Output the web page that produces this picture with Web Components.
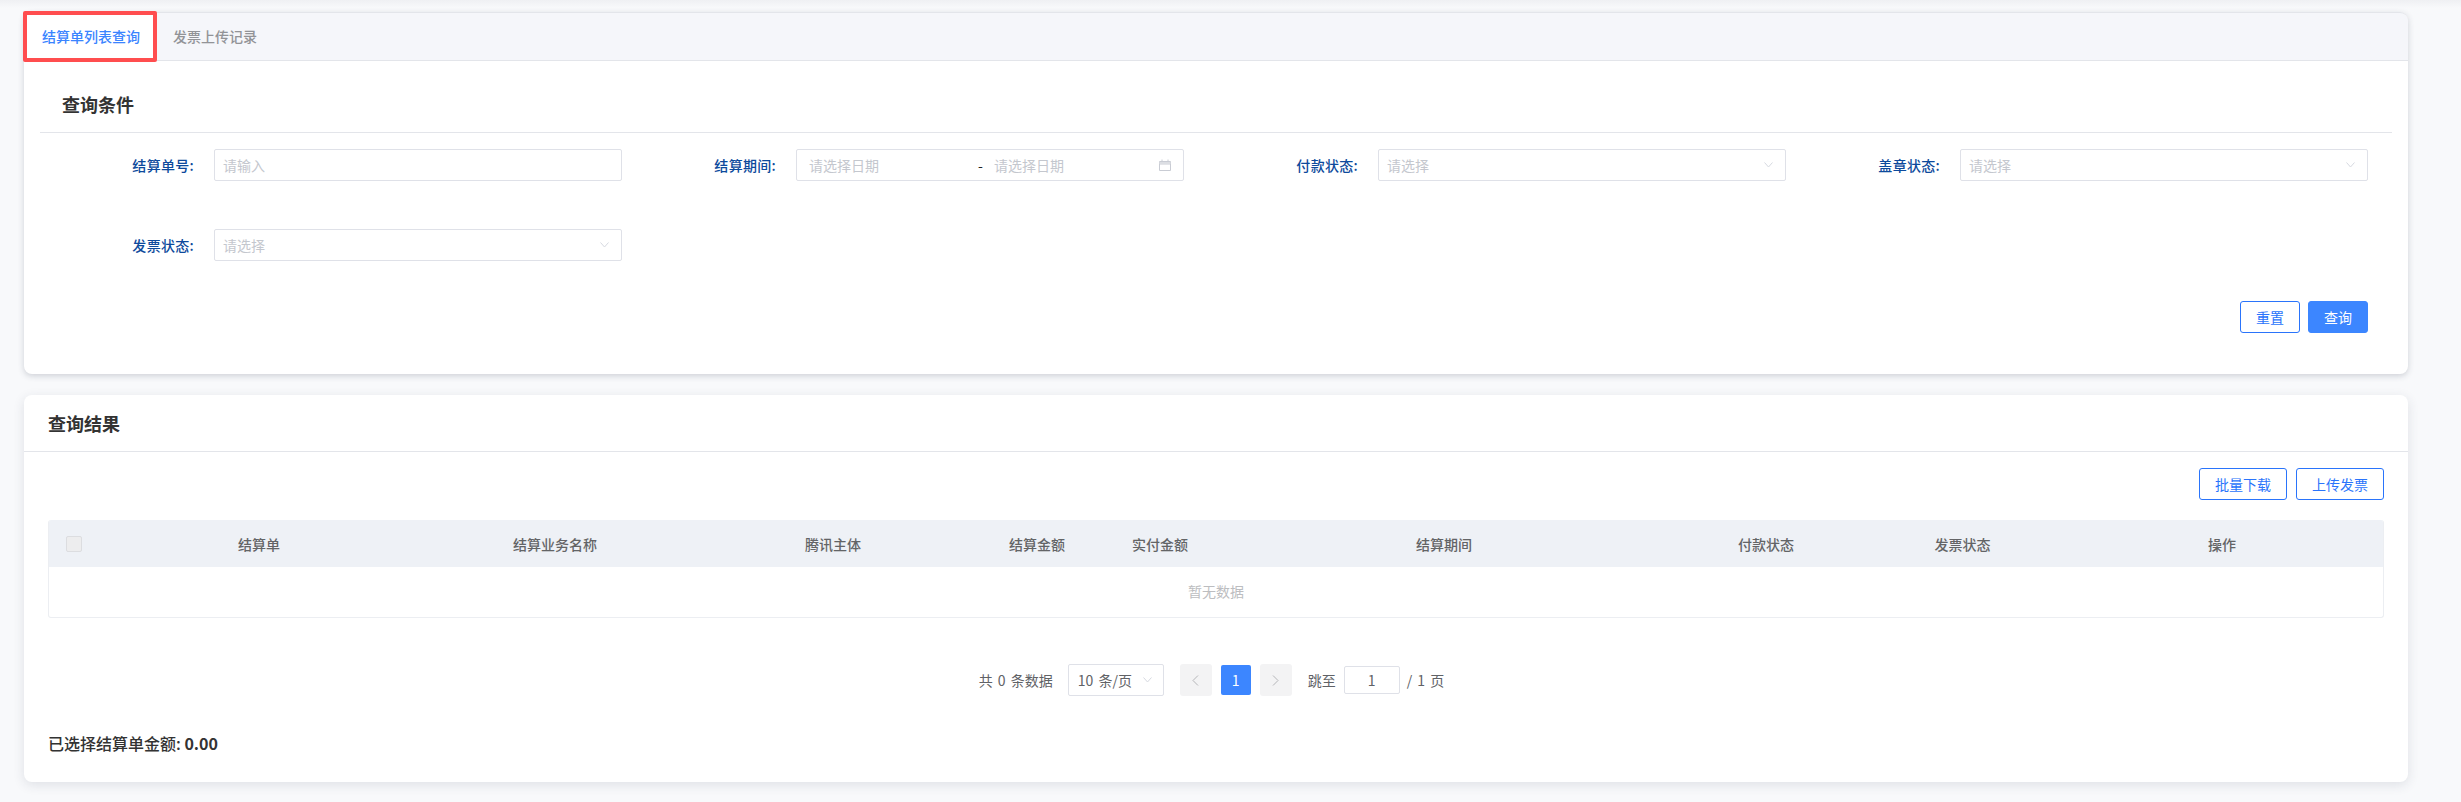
<!DOCTYPE html>
<html lang="zh-CN">
<head>
<meta charset="utf-8">
<title>结算单列表查询</title>
<style>
    html, body { margin: 0; height: 100%; }
    body {
        background: #f8f9fb;
        font-family: "Noto Sans CJK SC", "Noto Sans", sans-serif;
        font-size: 14px;
        color: #333;
        overflow: hidden;
    }
</style>
</head>
<body>
<settle-page>
    <page-card>
        <tab-bar active="结算单列表查询" other="发票上传记录"></tab-bar>
        <search-form></search-form>
    </page-card>
    <page-card class="second">
        <result-panel></result-panel>
    </page-card>
</settle-page>

<script>
// small shared icons
const CHEVRON = `<svg width="9" height="6" viewBox="0 0 9 6" fill="none"><path d="M.5.5l4 4.5 4-4.5" stroke="#d6d9e0" stroke-width="1"/></svg>`;
const CALENDAR = `<svg width="12" height="12" viewBox="0 0 12 12" fill="none"><path d="M.5 2.5h11v9H.5zM.5 5h11" stroke="#c9ccd4" stroke-width="1"/><path d="M.5 3h11v2H.5z" fill="#dcdee3"/><path d="M3 .5v2M9 .5v2" stroke="#c9ccd4" stroke-width="1"/></svg>`;

// page frame
class SettlePage extends HTMLElement {
    constructor() {
        super();
        this.attachShadow({mode: "open"});
        this.shadowRoot.innerHTML = `
            <style>
                :host {
                    display: flex;
                    flex-direction: column;
                    gap: 21px;
                    padding: 12px 53px 0 24px;
                    /* faint shadow from the top bar that is out of frame */
                    background: linear-gradient(#eff0f3, #f8f9fb 8px) no-repeat top / 100% 8px;
                }
            </style>
            <slot></slot>
        `;
    }
}
customElements.define('settle-page', SettlePage);

class PageCard extends HTMLElement {
    constructor() {
        super();
        this.attachShadow({mode: "open"});
        this.shadowRoot.innerHTML = `
            <style>
                :host {
                    display: block;
                    position: relative;
                    background: #fff;
                    border-radius: 8px;
                    box-shadow: 0 2px 6px rgba(40, 50, 70, .2);
                }
                :host(.second) {
                    box-shadow: 0 3px 12px rgba(40, 50, 70, .12);
                }
            </style>
            <slot></slot>
        `;
    }
}
customElements.define('page-card', PageCard);

// tabs, with the red annotation box on top of the active one
class TabBar extends HTMLElement {
    constructor() {
        super();
        this.attachShadow({mode: "open"});
    }
    connectedCallback() {
        this.shadowRoot.innerHTML = `
            <style>
                :host {
                    display: flex;
                    position: relative;
                    height: 47px;
                    background: #f5f6fa;
                    border: 1px solid #e3e5ea;
                    border-width: 1px 0 1px 0;
                    border-radius: 8px 8px 0 0;
                    line-height: 47px;
                    font-weight: 500;
                }
                span { padding: 0 16px 0 18px; color: #929397; white-space: nowrap; }
                .on { background: #fff; color: #3a84ff; width: 98px; }
                .on + span { padding-left: 17px; }
                .mark {
                    position: absolute;
                    left: -1px;
                    top: -2px;
                    width: 126px;
                    height: 43px;
                    border: 4px solid #ff4d4f;
                    border-radius: 2px;
                }
            </style>
            <span class="on">${this.getAttribute('active')}</span>
            <span>${this.getAttribute('other')}</span>
            <div class="mark"></div>
        `;
    }
}
customElements.define('tab-bar', TabBar);

// one label + control cell in the query grid
class FormField extends HTMLElement {
    constructor() {
        super();
        this.attachShadow({mode: "open"});
    }
    connectedCallback() {
        this.shadowRoot.innerHTML = `
            <style>
                :host { display: flex; align-items: center; height: 32px; }
                label {
                    box-sizing: border-box;
                    flex: none;
                    width: 174px;
                    padding-right: 20px;
                    text-align: right;
                    color: #0d4a9c;
                    font-weight: 500;
                    letter-spacing: .3px;
                    white-space: nowrap;
                }
            </style>
            <label>${this.getAttribute('label')}:</label>
            <slot></slot>
        `;
    }
}
customElements.define('form-field', FormField);

// fake input box; kind = text | select | date
class FieldBox extends HTMLElement {
    constructor() {
        super();
        this.attachShadow({mode: "open"});
    }
    connectedCallback() {
        const kind = this.getAttribute('kind') || 'text';
        const holder = this.getAttribute('holder') || '请选择';
        let inner = `<span class="ph">${holder}</span>`;
        if (kind === 'select') {
            inner += `<span class="end">${CHEVRON}</span>`;
        }
        if (kind === 'date') {
            inner = `<span class="ph d1">请选择日期</span><span class="dash">-</span>
                     <span class="ph d2">请选择日期</span><span class="end cal">${CALENDAR}</span>`;
        }
        this.shadowRoot.innerHTML = `
            <style>
                :host {
                    box-sizing: border-box;
                    display: flex;
                    align-items: center;
                    width: 408px;
                    height: 32px;
                    padding: 0 12px 0 8px;
                    background: #fff;
                    border: 1px solid #dfe1e8;
                    border-radius: 2px;
                }
                :host([kind="date"]) { width: 388px; padding-left: 12px; }
                .ph { color: #c4c7ce; white-space: nowrap; }
                .end { margin-left: auto; display: flex; }
                .d1 { width: 169px; }
                .dash { color: #222; width: 16px; }
            </style>
            ${inner}
        `;
    }
}
customElements.define('field-box', FieldBox);

class PlainBtn extends HTMLElement {
    constructor() {
        super();
        this.attachShadow({mode: "open"});
        this.shadowRoot.innerHTML = `
            <style>
                :host {
                    box-sizing: border-box;
                    display: inline-flex;
                    align-items: center;
                    justify-content: center;
                    width: 60px;
                    height: 32px;
                    background: #fff;
                    border: 1px solid #2a74fb;
                    border-radius: 3px;
                    color: #2a74fb;
                    font-size: 14px;
                    white-space: nowrap;
                }
                :host(.primary) { background: #3c86ff; border-color: #3c86ff; color: #fff; }
                :host(.wide) { width: 88px; }
            </style>
            <slot></slot>
        `;
    }
}
customElements.define('plain-btn', PlainBtn);

class SearchForm extends HTMLElement {
    constructor() {
        super();
        this.attachShadow({mode: "open"});
        this.shadowRoot.innerHTML = `
            <style>
                :host { display: block; padding: 0 16px 41px; }
                h3 {
                    margin: 0;
                    padding: 29px 0 14px 22px;
                    font-size: 18px;
                    line-height: 28px;
                    font-weight: 700;
                    color: #333;
                    border-bottom: 1px solid #e3e5ea;
                }
                .grid {
                    display: grid;
                    grid-template-columns: repeat(4, 582px);
                    row-gap: 48px;
                    margin-top: 16px;
                }
                .btns {
                    display: flex;
                    justify-content: flex-end;
                    gap: 8px;
                    margin: 40px 24px 0 0;
                }
            </style>
            <h3>查询条件</h3>
            <div class="grid">
                <form-field label="结算单号"><field-box holder="请输入"></field-box></form-field>
                <form-field label="结算期间"><field-box kind="date"></field-box></form-field>
                <form-field label="付款状态"><field-box kind="select"></field-box></form-field>
                <form-field label="盖章状态"><field-box kind="select"></field-box></form-field>
                <form-field label="发票状态"><field-box kind="select"></field-box></form-field>
            </div>
            <div class="btns">
                <plain-btn>重置</plain-btn>
                <plain-btn class="primary">查询</plain-btn>
            </div>
        `;
    }
}
customElements.define('search-form', SearchForm);

class ResultTable extends HTMLElement {
    constructor() {
        super();
        this.attachShadow({mode: "open"});
        const cols = ['结算单', '结算业务名称', '腾讯主体', '结算金额', '实付金额', '结算期间', '付款状态', '发票状态', '操作'];
        this.shadowRoot.innerHTML = `
            <style>
                :host {
                    display: block;
                    border: 1px solid #eceef2;
                    border-top: 0;
                    border-radius: 3px;
                    overflow: hidden;
                }
                .head {
                    display: grid;
                    grid-template-columns: 51px 318px 274px 282px 126px 120px 448px 196px 197px 1fr;
                    align-items: center;
                    height: 47px;
                    background: #eef1f6;
                    color: #636466;
                    font-weight: 500;
                    text-align: center;
                }
                .box {
                    box-sizing: border-box;
                    width: 16px;
                    height: 16px;
                    margin-left: 17px;
                    background: #ededee;
                    border: 1px solid #dcdde0;
                    border-radius: 2px;
                }
                .empty {
                    height: 50px;
                    line-height: 49px;
                    text-align: center;
                    color: #bcbdc0;
                }
            </style>
            <div class="head">
                <div class="box"></div>
                ${cols.map(c => `<div>${c}</div>`).join('')}
            </div>
            <div class="empty">暂无数据</div>
        `;
    }
}
customElements.define('result-table', ResultTable);

class PagerBar extends HTMLElement {
    constructor() {
        super();
        this.attachShadow({mode: "open"});
        this.shadowRoot.innerHTML = `
            <style>
                :host {
                    display: flex;
                    align-items: center;
                    justify-content: center;
                    height: 32px;
                    padding-right: 9px;
                    color: #606266;
                    white-space: nowrap;
                    word-spacing: 2px;
                }
                .size {
                    box-sizing: border-box;
                    display: flex;
                    align-items: center;
                    justify-content: space-between;
                    width: 96px;
                    height: 32px;
                    margin: 0 16px 0 15px;
                    padding: 0 11px 0 9px;
                    border: 1px solid #dfe1e8;
                    border-radius: 2px;
                }
                .arrow {
                    display: flex;
                    align-items: center;
                    justify-content: center;
                    width: 32px;
                    height: 32px;
                    background: #f3f3f4;
                    border-radius: 3px;
                }
                .cur {
                    width: 30px;
                    height: 30px;
                    line-height: 30px;
                    margin: 0 9px;
                    text-align: center;
                    background: #3c86ff;
                    color: #fff;
                    border-radius: 2px;
                }
                .jump {
                    box-sizing: border-box;
                    width: 56px;
                    height: 28px;
                    line-height: 26px;
                    margin: 0 7px 0 8px;
                    text-align: center;
                    border: 1px solid #dfe1e8;
                    border-radius: 2px;
                }
                .goto { margin-left: 16px; }
            </style>
            <span>共 0 条数据</span>
            <div class="size"><span>10 条/页</span>${CHEVRON}</div>
            <div class="arrow"><svg width="7" height="11" viewBox="0 0 7 11" fill="none"><path d="M6 .5l-5 5 5 5" stroke="#b4b5b8"/></svg></div>
            <div class="cur">1</div>
            <div class="arrow"><svg width="7" height="11" viewBox="0 0 7 11" fill="none"><path d="M1 .5l5 5-5 5" stroke="#b4b5b8"/></svg></div>
            <span class="goto">跳至</span>
            <div class="jump">1</div>
            <span>/ 1 页</span>
        `;
    }
}
customElements.define('pager-bar', PagerBar);

class ResultPanel extends HTMLElement {
    constructor() {
        super();
        this.attachShadow({mode: "open"});
        this.shadowRoot.innerHTML = `
            <style>
                :host { display: block; padding-bottom: 27px; }
                h3 {
                    margin: 0;
                    padding: 14px 24px;
                    font-size: 18px;
                    line-height: 28px;
                    font-weight: 700;
                    color: #333;
                    border-bottom: 1px solid #e3e5ea;
                }
                .tools {
                    display: flex;
                    justify-content: flex-end;
                    gap: 9px;
                    margin: 16px 24px 20px;
                }
                result-table { margin: 0 24px; }
                pager-bar { margin-top: 46px; }
                .sum {
                    margin: 35px 24px 0;
                    font-size: 16px;
                    line-height: 24px;
                    font-weight: 500;
                    color: #333;
                }
                .sum b { font-weight: 700; }
            </style>
            <h3>查询结果</h3>
            <div class="tools">
                <plain-btn class="wide">批量下载</plain-btn>
                <plain-btn class="wide">上传发票</plain-btn>
            </div>
            <result-table></result-table>
            <pager-bar></pager-bar>
            <div class="sum">已选择结算单金额: <b>0.00</b></div>
        `;
    }
}
customElements.define('result-panel', ResultPanel);
</script>
</body>
</html>
